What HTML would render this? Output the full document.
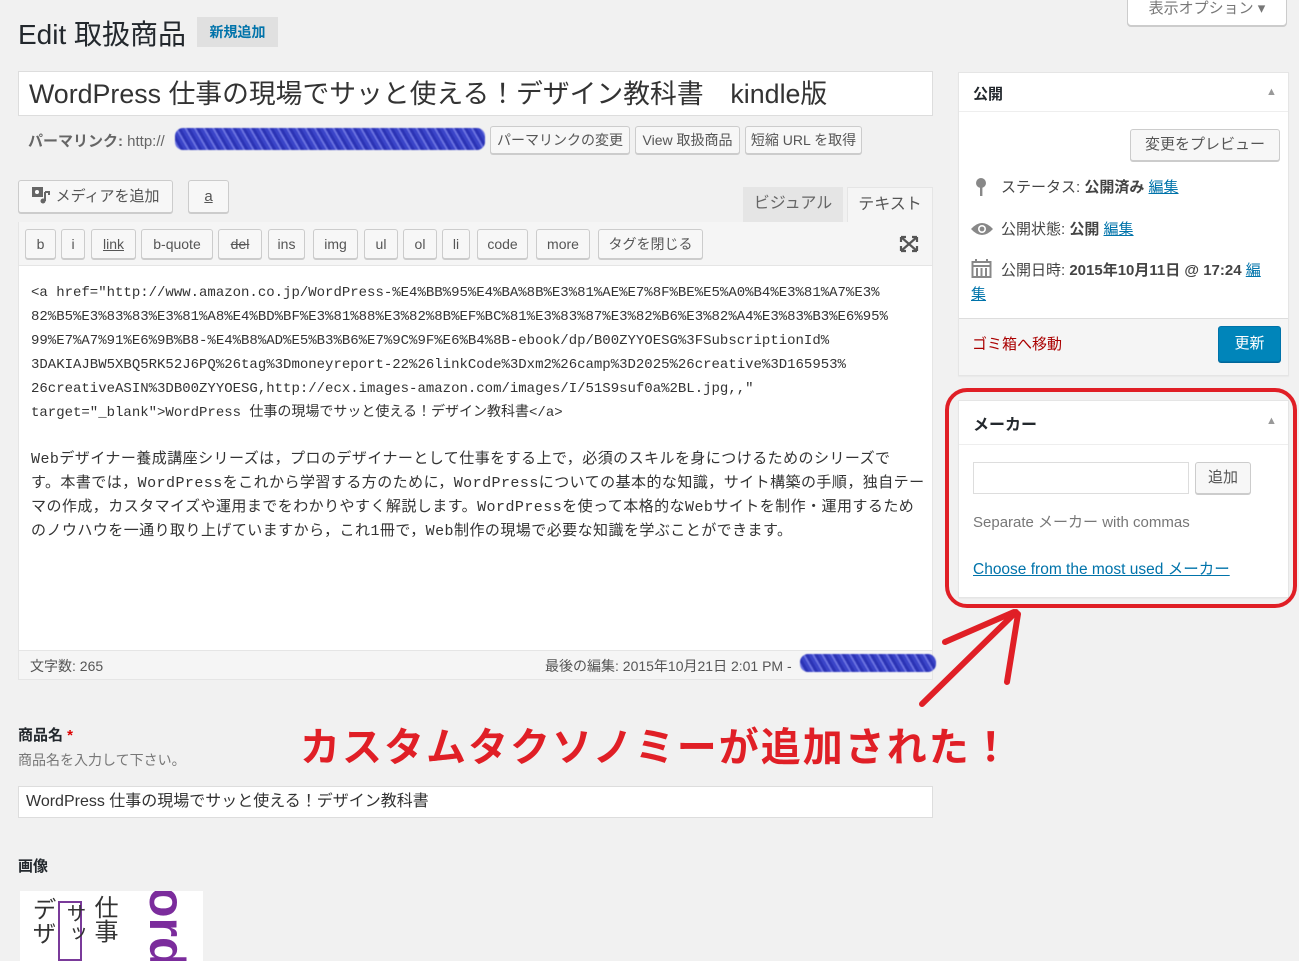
<!DOCTYPE html>
<html><head><meta charset="utf-8">
<style>
*{box-sizing:border-box;margin:0;padding:0}
body{width:1299px;height:953px;background:#f1f1f1;position:relative;overflow:hidden;font-family:"Liberation Sans","Noto Sans CJK JP",sans-serif;color:#444}
.a{position:absolute;white-space:nowrap}
.btn{position:absolute;background:#f7f7f7;border:1px solid #ccc;border-radius:3px;box-shadow:0 1px 0 #ccc;font-size:14px;color:#555;text-align:center;white-space:nowrap}
.tb{position:absolute;top:229px;height:30px;line-height:28px;background:#f7f7f7;border:1px solid #ccc;border-radius:3px;box-shadow:0 1px 0 #ccc;font-size:14px;color:#555;text-align:center}
.mono{font-family:"Liberation Mono","Noto Sans CJK JP",monospace;font-size:14px;letter-spacing:0;color:#333}
.para{font-family:"Liberation Mono","Noto Sans CJK JP",monospace;font-size:15px;letter-spacing:0.45px;color:#333}
.box{position:absolute;background:#fff;border:1px solid #e5e5e5;box-shadow:0 1px 1px rgba(0,0,0,.04)}
a{color:#0073aa}
.scrib{position:absolute;background:repeating-linear-gradient(60deg,#3a44c8 0 3px,#6a72e0 3px 5px,#2b33b5 5px 8px);border-radius:8px;filter:blur(.6px)}
</style></head><body>

<div class="btn" style="left:1127px;top:-6px;width:160px;height:32px;line-height:28px;background:#fff;border-radius:0 0 4px 4px;color:#777;font-size:15px">表示オプション ▾</div>

<div class="a" style="left:18px;top:13px;font-size:28px;color:#23282d">Edit 取扱商品</div>
<div class="a" style="left:197px;top:17px;width:81px;height:30px;background:#e0e0e0;color:#0073aa;font-size:14px;font-weight:bold;text-align:center;line-height:30px">新規追加</div>

<div class="a" style="left:18px;top:71px;width:915px;height:45px;background:#fff;border:1px solid #ddd;font-size:26.8px;color:#333;padding:4px 10px;line-height:36px">WordPress 仕事の現場でサッと使える！デザイン教科書　kindle版</div>

<div class="a" style="left:28px;top:130px;font-size:15px;color:#666"><b>パーマリンク:</b> http://</div>
<div class="scrib" style="left:175px;top:128px;width:310px;height:22px"></div>
<div class="btn" style="left:490px;top:126px;width:140px;height:28px;line-height:26px">パーマリンクの変更</div>
<div class="btn" style="left:635px;top:126px;width:105px;height:28px;line-height:26px">View 取扱商品</div>
<div class="btn" style="left:745px;top:126px;width:117px;height:28px;line-height:26px">短縮 URL を取得</div>

<div class="btn" style="left:18px;top:180px;width:155px;height:33px;line-height:31px;font-size:15px">
<svg width="20" height="18" viewBox="0 0 20 18" style="vertical-align:-3px"><rect x="1" y="1" width="11" height="10" fill="#666"/><circle cx="6" cy="6" r="2" fill="#fff"/><path d="M14 6v9M14 6h4v3" stroke="#666" stroke-width="2" fill="none"/><circle cx="12" cy="15" r="2.5" fill="#666"/></svg> メディアを追加</div>
<div class="btn" style="left:188px;top:180px;width:41px;height:33px;line-height:31px;font-size:15px;text-decoration:underline">a</div>

<div class="a" style="left:743px;top:187px;width:100px;height:35px;background:#e5e5e5;font-size:16px;color:#666;text-align:center;line-height:33px">ビジュアル</div>
<div class="a" style="left:847px;top:187px;width:86px;height:35px;background:#f5f5f5;font-size:16px;color:#555;text-align:center;line-height:33px;border:1px solid #e5e5e5;border-bottom:none">テキスト</div>

<div class="a" style="left:18px;top:222px;width:915px;height:458px;background:#fff;border:1px solid #e5e5e5"></div>
<div class="a" style="left:19px;top:222px;width:913px;height:44px;background:#f5f5f5;border-bottom:1px solid #e5e5e5"></div>
<div class="tb" style="left:25px;width:31px">b</div>
<div class="tb" style="left:61px;width:24px">i</div>
<div class="tb" style="left:91px;width:45px;text-decoration:underline">link</div>
<div class="tb" style="left:141px;width:72px">b-quote</div>
<div class="tb" style="left:218px;width:44px;text-decoration:line-through">del</div>
<div class="tb" style="left:268px;width:37px">ins</div>
<div class="tb" style="left:313px;width:45px">img</div>
<div class="tb" style="left:364px;width:34px">ul</div>
<div class="tb" style="left:403px;width:34px">ol</div>
<div class="tb" style="left:442px;width:28px">li</div>
<div class="tb" style="left:477px;width:51px">code</div>
<div class="tb" style="left:536px;width:54px">more</div>
<div class="tb" style="left:598px;width:105px">タグを閉じる</div>
<svg class="a" style="left:899px;top:235px" width="20" height="18" viewBox="0 0 20 18"><path d="M2 2l16 14M18 2L2 16M2 2h5M2 2v5M18 2h-5M18 2v5M2 16h5M2 16v-5M18 16h-5M18 16v-5" stroke="#555" stroke-width="2.2" fill="none"/></svg>

<div class="a mono" style="left:31px;top:281px;line-height:24px">&lt;a href="http://www.amazon.co.jp/WordPress-%E4%BB%95%E4%BA%8B%E3%81%AE%E7%8F%BE%E5%A0%B4%E3%81%A7%E3%<br>82%B5%E3%83%83%E3%81%A8%E4%BD%BF%E3%81%88%E3%82%8B%EF%BC%81%E3%83%87%E3%82%B6%E3%82%A4%E3%83%B3%E6%95%<br>99%E7%A7%91%E6%9B%B8-%E4%B8%AD%E5%B3%B6%E7%9C%9F%E6%B4%8B-ebook/dp/B00ZYYOESG%3FSubscriptionId%<br>3DAKIAJBW5XBQ5RK52J6PQ%26tag%3Dmoneyreport-22%26linkCode%3Dxm2%26camp%3D2025%26creative%3D165953%<br>26creativeASIN%3DB00ZYYOESG,http://ecx.images-amazon.com/images/I/51S9suf0a%2BL.jpg,,"<br>target="_blank"&gt;WordPress 仕事の現場でサッと使える！デザイン教科書&lt;/a&gt;</div>
<div class="a para" style="left:31px;top:448px;line-height:24px">Webデザイナー養成講座シリーズは，プロのデザイナーとして仕事をする上で，必須のスキルを身につけるためのシリーズで<br>す。本書では，WordPressをこれから学習する方のために，WordPressについての基本的な知識，サイト構築の手順，独自テー<br>マの作成，カスタマイズや運用までをわかりやすく解説します。WordPressを使って本格的なWebサイトを制作・運用するため<br>のノウハウを一通り取り上げていますから，これ1冊で，Web制作の現場で必要な知識を学ぶことができます。</div>

<div class="a" style="left:19px;top:650px;width:913px;height:29px;background:#f5f5f5;border-top:1px solid #e5e5e5"></div>
<div class="a" style="left:30px;top:656px;font-size:14px;color:#555">文字数: 265</div>
<div class="a" style="left:545px;top:656px;font-size:14px;color:#555">最後の編集: 2015年10月21日 2:01 PM -</div>
<div class="scrib" style="left:800px;top:654px;width:136px;height:18px"></div>

<div class="a" style="left:18px;top:724px;font-size:15px;font-weight:bold;color:#23282d">商品名 <span style="color:#d00">*</span></div>
<div class="a" style="left:18px;top:750px;font-size:14px;color:#777">商品名を入力して下さい。</div>
<div class="a" style="left:18px;top:786px;width:915px;height:32px;background:#fff;border:1px solid #ddd;font-size:16px;color:#333;padding-left:7px;line-height:30px">WordPress 仕事の現場でサッと使える！デザイン教科書</div>
<div class="a" style="left:18px;top:855px;font-size:15px;font-weight:bold;color:#23282d">画像</div>
<div class="a" style="left:20px;top:891px;width:183px;height:70px;background:#fff;overflow:hidden">
<div class="a" style="left:8px;top:6px;font-size:24px;color:#333;writing-mode:vertical-rl;line-height:26px">デザ</div>
<div class="a" style="left:38px;top:10px;width:24px;height:60px;border:2px solid #7a3a9a"></div>
<div class="a" style="left:40px;top:12px;font-size:20px;color:#333;writing-mode:vertical-rl">サッ</div>
<div class="a" style="left:66px;top:4px;font-size:24px;color:#333;writing-mode:vertical-rl">仕事</div>
<div class="a" style="left:118px;top:-4px;font-size:50px;font-weight:bold;color:#7b2c9c;writing-mode:vertical-rl">ord</div>
</div>

<!-- sidebar publish -->
<div class="box" style="left:958px;top:72px;width:331px;height:304px"></div>
<div class="a" style="left:959px;top:111px;width:329px;height:1px;background:#eee"></div>
<div class="a" style="left:973px;top:83px;font-size:15px;font-weight:bold;color:#23282d">公開</div>
<div class="a" style="left:1266px;top:86px;font-size:11px;color:#999">▲</div>
<div class="btn" style="left:1130px;top:129px;width:150px;height:32px;line-height:30px;font-size:15px">変更をプレビュー</div>
<svg class="a" style="left:974px;top:177px" width="14" height="20" viewBox="0 0 14 20"><circle cx="7" cy="6" r="5" fill="#888"/><rect x="6" y="9" width="2.4" height="10" fill="#888"/></svg>
<div class="a" style="left:1001px;top:176px;font-size:15px;color:#444">ステータス: <b>公開済み</b> <a href="#">編集</a></div>
<svg class="a" style="left:970px;top:221px" width="24" height="16" viewBox="0 0 24 16"><path d="M1 8Q12-4 23 8Q12 20 1 8z" fill="#888"/><circle cx="12" cy="8" r="4" fill="#fff"/><circle cx="12" cy="8" r="2.4" fill="#888"/></svg>
<div class="a" style="left:1001px;top:218px;font-size:15px;color:#444">公開状態: <b>公開</b> <a href="#">編集</a></div>
<svg class="a" style="left:971px;top:258px" width="21" height="20" viewBox="0 0 21 20"><path d="M5 1v4M16 1v4" stroke="#888" stroke-width="2"/><rect x="1.5" y="4" width="18" height="15" fill="none" stroke="#888" stroke-width="2"/><path d="M1 8h19M6 10v8M10.5 10v8M15 10v8" stroke="#888" stroke-width="2"/></svg>
<div class="a" style="left:1001px;top:259px;font-size:15px;color:#444">公開日時: <b>2015年10月11日 @ 17:24</b> <a href="#">編</a></div>
<div class="a" style="left:971px;top:283px;font-size:15px"><a href="#">集</a></div>
<div class="a" style="left:959px;top:318px;width:329px;height:57px;background:#f5f5f5;border-top:1px solid #ddd"></div>
<div class="a" style="left:972px;top:333px;font-size:15px;color:#a00">ゴミ箱へ移動</div>
<div class="a" style="left:1218px;top:326px;width:63px;height:36px;background:#0085ba;border:1px solid #0073aa;border-radius:3px;box-shadow:0 1px 0 #006799;color:#fff;font-size:15px;text-align:center;line-height:34px">更新</div>

<!-- maker -->
<div class="box" style="left:958px;top:400px;width:331px;height:198px"></div>
<div class="a" style="left:959px;top:444px;width:329px;height:1px;background:#eee"></div>
<div class="a" style="left:973px;top:411px;font-size:16px;font-weight:bold;color:#23282d">メーカー</div>
<div class="a" style="left:1266px;top:415px;font-size:11px;color:#999">▲</div>
<div class="a" style="left:973px;top:462px;width:216px;height:32px;background:#fff;border:1px solid #ddd"></div>
<div class="btn" style="left:1195px;top:462px;width:56px;height:32px;line-height:30px;font-size:15px">追加</div>
<div class="a" style="left:973px;top:511px;font-size:15px;color:#777">Separate メーカー with commas</div>
<div class="a" style="left:973px;top:557px;font-size:15.5px"><a href="#" style="color:#0073aa">Choose from the most used メーカー</a></div>

<div class="a" style="left:945px;top:388px;width:352px;height:220px;border:4px solid #e01f26;border-radius:22px"></div>
<svg class="a" style="left:0;top:0" width="1299" height="953"><g stroke="#e01f26" stroke-width="6" stroke-linecap="round" fill="none"><path d="M922 704L1016 612"/><path d="M945 642L1014 612"/><path d="M1007 682L1018 614"/></g></svg>

<div class="a" style="left:300px;top:715px;font-size:40px;font-weight:bold;color:#e01f26;letter-spacing:2px">カスタムタクソノミーが追加された！</div>
</body></html>
